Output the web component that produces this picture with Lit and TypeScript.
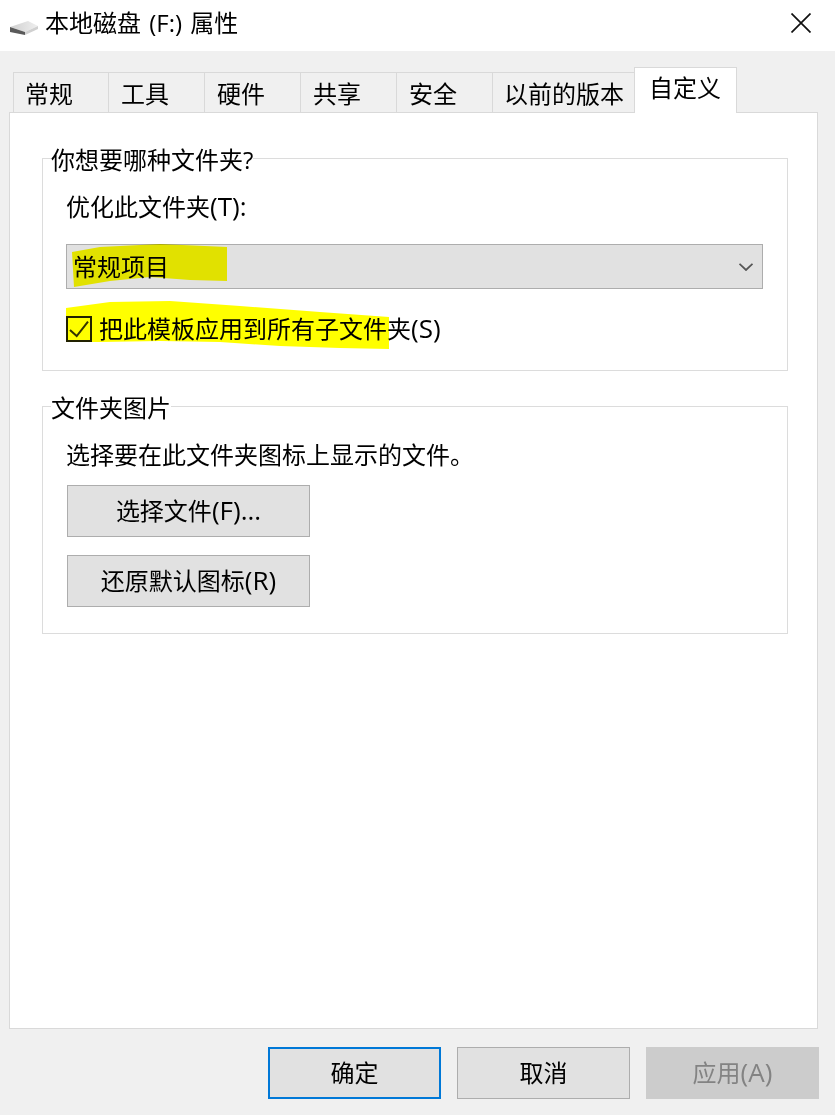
import { LitElement, html, css } from 'lit';
import { customElement } from 'lit/decorators.js';

const TABS = ['常规', '工具', '硬件', '共享', '安全', '以前的版本'];

@customElement('app-root')
export class AppRoot extends LitElement {
  static styles = css`
    :host {
      display: block;
      width: 835px;
      height: 1115px;
      overflow: hidden;
      position: relative;
      background: #f0f0f0;
      color: #000;
      font-family: 'Open Sans', 'Noto Sans CJK SC', sans-serif;
      font-size: 24px;
      line-height: 32px;
    }

    /* latin part of a label runs a bit larger than the CJK around it */
    .la {
      font-size: 26px;
      line-height: 0;
    }

    /* title bar */
    .title {
      height: 51px;
      background: #fff;
      display: flex;
      align-items: center;
      padding: 0 24px 6px 10px;
      box-sizing: border-box;
    }
    .title .drive {
      width: 28px;
      height: 16px;
      margin: 11px 7px 0 0;
      flex: none;
    }
    .title .name {
      flex: 1;
      word-spacing: 2px;
    }
    .title .close {
      width: 20px;
      height: 20px;
      flex: none;
    }

    /* tabs */
    .tabs {
      display: flex;
      align-items: flex-end;
      margin: 16px 0 -1px 13px;
      position: relative;
      z-index: 1;
    }
    .tab {
      height: 41px;
      width: 96px;
      box-sizing: border-box;
      border: 1px solid #d9d9d9;
      border-left-width: 0;
      padding-left: 12px;
      line-height: 42px;
      white-space: nowrap;
    }
    .tab:first-child {
      border-left-width: 1px;
      padding-left: 11px;
    }
    .tab.wide {
      width: 142px;
      padding-left: 11px;
    }
    .tab.active {
      width: 103px;
      height: 46px;
      background: #fff;
      border-top-color: #d9d9d9;
      border-left-width: 1px;
      border-bottom: 0;
      padding-left: 14px;
      line-height: 40px;
      margin-left: -1px;
    }

    /* panel */
    .panel {
      height: 917px;
      box-sizing: border-box;
      margin: 0 17px 0 9px;
      background: #fff;
      border: 1px solid #d9d9d9;
      padding: 45px 29px 0 32px;
    }
    .group {
      border: 1px solid #dcdcdc;
      padding: 0 24px 0 23px;
      box-sizing: border-box;
    }
    .group.first {
      height: 213px;
    }
    .group.second {
      height: 228px;
      margin-top: 35px;
    }
    .legend {
      display: table;
      background: #fff;
      margin: -15px 0 0 -15px;
      height: 32px;
    }
    .label {
      margin-top: 15px;
    }
    .select {
      display: flex;
      align-items: center;
      justify-content: space-between;
      height: 45px;
      box-sizing: border-box;
      margin-top: 21px;
      padding: 0 9px 0 6px;
      background: #e1e1e1;
      border: 1px solid #adadad;
    }
    .select svg {
      width: 14px;
      height: 8px;
    }
    .check-row {
      display: flex;
      align-items: center;
      gap: 7px;
      margin-top: 24px;
    }
    .check {
      width: 26px;
      height: 26px;
      box-sizing: border-box;
      border: 2px solid #222;
      display: block;
      flex: none;
    }
    .hint {
      margin-top: 15px;
    }
    .btn {
      display: flex;
      align-items: center;
      justify-content: center;
      box-sizing: border-box;
      height: 52px;
      background: #e1e1e1;
      border: 1px solid #adadad;
    }
    .group .btn {
      width: 243px;
      margin: 14px 0 0 1px;
    }
    .group .btn + .btn {
      margin-top: 18px;
    }

    /* footer buttons */
    .footer {
      display: flex;
      justify-content: flex-end;
      gap: 16px;
      padding: 18px 16px 0 0;
    }
    .footer .btn {
      width: 173px;
    }
    .footer .btn.default {
      border: 2px solid #0078d7;
    }
    .footer .btn.disabled {
      background: #ccc;
      border-color: #ccc;
      color: #838383;
    }

    /* marker scribbles lie over the text */
    .marker {
      position: absolute;
      left: 0;
      top: 0;
      width: 835px;
      height: 1115px;
      mix-blend-mode: darken;
      pointer-events: none;
      z-index: 2;
    }
  `;

  render() {
    return html`
      <div class="title">
        <svg class="drive" viewBox="0 0 28 16">
          <defs>
            <linearGradient id="top" x1="0" y1="0" x2="1" y2="0">
              <stop offset="0" stop-color="#cfcfcf" />
              <stop offset="1" stop-color="#efefef" />
            </linearGradient>
          </defs>
          <path d="M0 7 L18 1 L28 6 L15 12 Z" fill="url(#top)" />
          <path d="M0 7 L15 12 L15 15 L0 12 Z" fill="#5a5a5a" />
          <path d="M15 12 L28 6 L28 9 L15 15 Z" fill="#d0d0d0" />
        </svg>
        <div class="name">本地磁盘 (F:) 属性</div>
        <svg class="close" viewBox="0 0 20 20" fill="none" stroke="#111" stroke-width="1.700">
          <path d="M0.500 0.500 L19.500 19.500 M19.500 0.500 L0.500 19.500" />
        </svg>
      </div>

      <div class="tabs">
        ${TABS.map(
          (t, i) => html`<div class="tab ${i === 5 ? 'wide' : ''}">${t}</div>`
        )}
        <div class="tab active">自定义</div>
      </div>

      <div class="panel">
        <div class="group first">
          <div class="legend">你想要哪种文件夹?</div>
          <div class="label">优化此文件夹<span class="la">(T):</span></div>
          <div class="select">
            <span>常规项目</span>
            <svg viewBox="0 0 14 8" fill="none" stroke="#555" stroke-width="1.800">
              <path d="M0.500 0.800 L7 7 L13.500 0.800" />
            </svg>
          </div>
          <div class="check-row">
            <svg class="check" viewBox="0 0 22 22" fill="none" stroke="#333" stroke-width="2">
              <path d="M2 12 L8.700 18 L20 3.700" />
            </svg>
            <span>把此模板应用到所有子文件夹<span class="la">(S)</span></span>
          </div>
        </div>

        <div class="group second">
          <div class="legend">文件夹图片</div>
          <div class="hint">选择要在此文件夹图标上显示的文件。</div>
          <div class="btn"><span>选择文件<span class="la">(F)...</span></span></div>
          <div class="btn"><span>还原默认图标<span class="la">(R)</span></span></div>
        </div>
      </div>

      <div class="footer">
        <div class="btn default">确定</div>
        <div class="btn">取消</div>
        <div class="btn disabled"><span>应用<span class="la">(A)</span></span></div>
      </div>

      <svg class="marker" viewBox="0 0 835 1115">
        <path
          fill="#e6e600"
          d="M72 252 L100 247 L160 244 L227 247 L227 281 L190 280 L150 277 L110 281 L74 287 Z"
        />
        <path
          fill="#ffff00"
          d="M66 308 L110 302 L170 301 L240 306 L320 312 L389 317 L389 349 L340 348 L280 346 L220 342 L160 341 L100 342 L66 342 Z"
        />
      </svg>
    `;
  }
}
